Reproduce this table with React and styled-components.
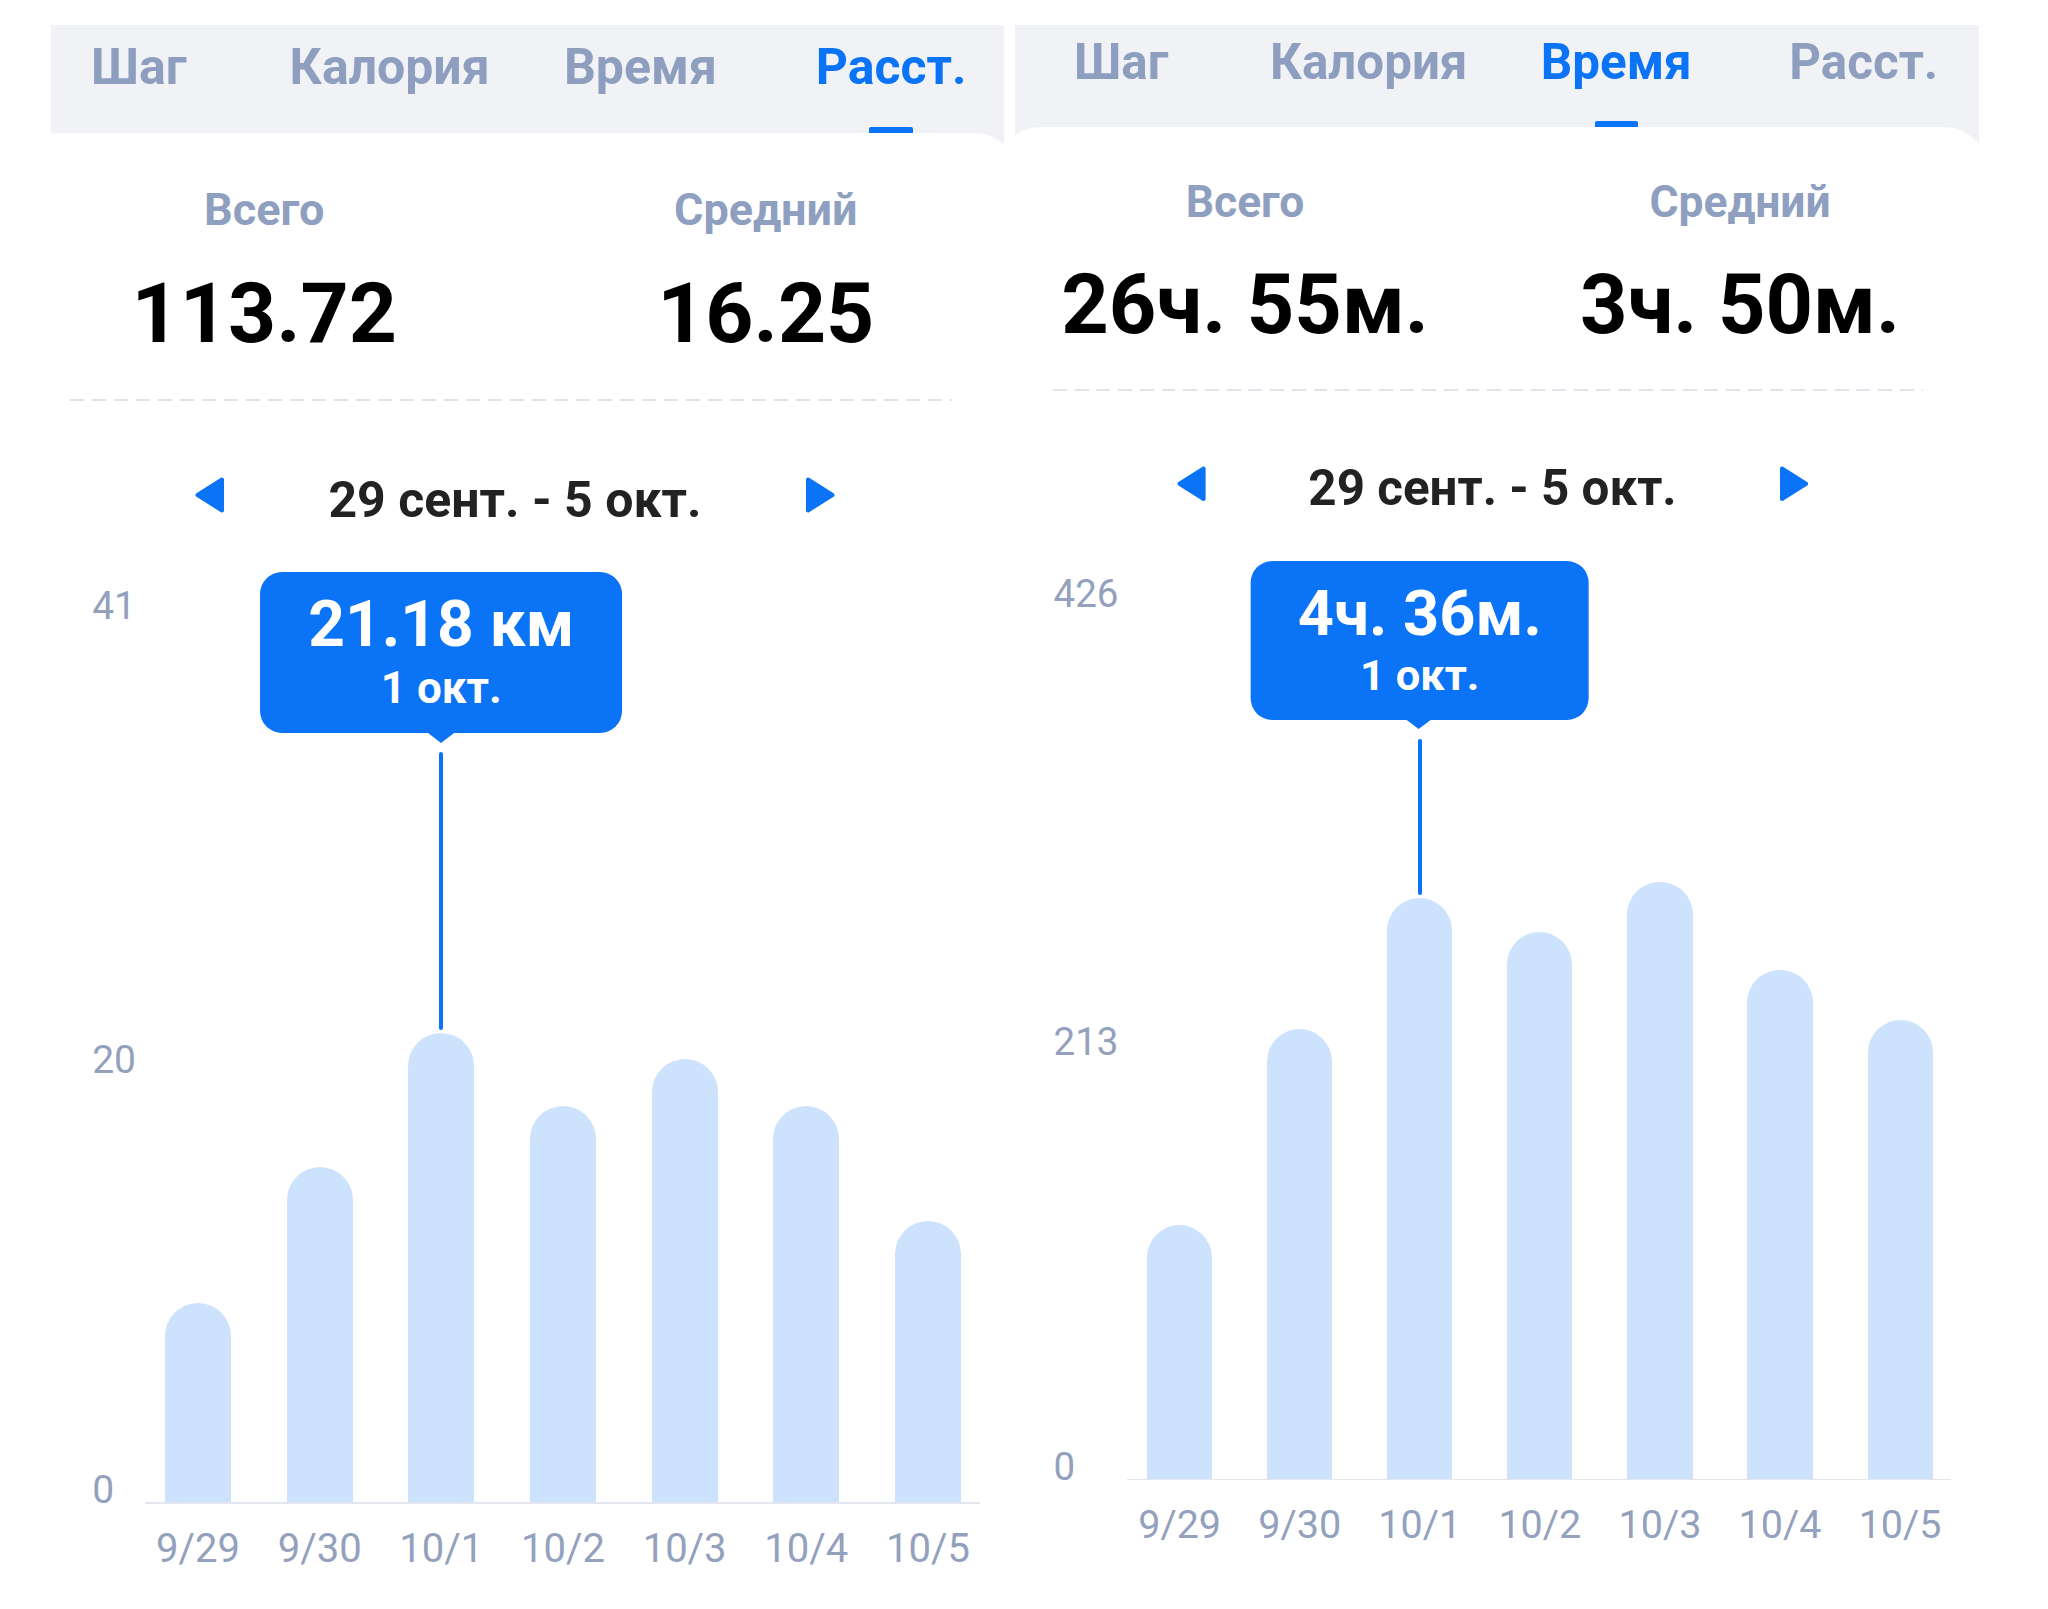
import styled, { createGlobalStyle } from "styled-components";

const BLUE = "#0b73f6";
const SLATE = "#8e9ebe";

const GlobalStyle = createGlobalStyle`
  * { box-sizing: border-box; }
  html, body {
    margin: 0;
    padding: 0;
    background: #fff;
  }
  body {
    font-family: Roboto, "Noto Sans", "Liberation Sans", sans-serif;
  }
`;

const Page = styled.div`
  display: flex;
  gap: 11px;
  width: 2048px;
  height: 1609px;
  padding: 25px 0 0 51px;
  overflow: hidden;
  background: #fff;
`;

const Panel = styled.section`
  flex-shrink: 0;
  width: ${p => p.$width}px;
  height: 1584px;
  overflow: hidden;
`;

const Screen = styled.div`
  width: 1003px;
  margin-left: ${p => p.$offset}px;
  zoom: ${p => p.$zoom};
`;

const TabBar = styled.div`
  display: grid;
  grid-template-columns: repeat(4, 1fr);
  height: ${p => p.$height + 40}px;
  padding-top: ${p => p.$pad}px;
  padding-bottom: 40px;
  background: #f0f2f6;
`;

const Tab = styled.div`
  display: flex;
  flex-direction: column;
  align-items: center;
  justify-content: space-between;
  font-size: 50px;
  font-weight: 700;
  line-height: 1;
  color: ${p => (p.$active ? BLUE : SLATE)};
`;

const Indicator = styled.span`
  width: 44px;
  height: 6px;
  border-radius: 2px 2px 0 0;
  background: ${BLUE};
`;

const Card = styled.div`
  position: relative;
  margin-top: -40px;
  padding-top: 54px;
  background: #fff;
  border-radius: 43px 43px 0 0;
`;

const Stats = styled.div`
  display: grid;
  grid-template-columns: 1fr 1fr;
`;

const Stat = styled.div`
  display: flex;
  flex-direction: column;
  align-items: center;
  gap: 40px;
`;

const StatLabel = styled.div`
  font-size: 45px;
  font-weight: 700;
  line-height: 1;
  color: #8f9fbf;
`;

const StatValue = styled.div`
  font-size: 84px;
  font-weight: 700;
  line-height: 1;
  color: #000;
`;

const Divider = styled.div`
  height: 2px;
  margin: 43px 65px 0 56px;
  background: repeating-linear-gradient(to right, #dfe3ea 0 14px, transparent 14px 22px);
`;

const DateNav = styled.div`
  display: grid;
  grid-template-columns: 30px 580px 30px;
  justify-content: center;
  align-items: center;
  margin-top: 74px;
`;

const DateText = styled.div`
  text-align: center;
  font-size: 50px;
  font-weight: 700;
  line-height: 1;
  color: #222;
`;

const ArrowIcon = styled.svg`
  display: block;
  margin-bottom: 10px;
  fill: ${BLUE};
  stroke: ${BLUE};
  stroke-width: 4;
  stroke-linejoin: round;
  transform: ${p => (p.$dir === "right" ? "scaleX(-1)" : "none")};
`;

const ChartRow = styled.div`
  display: grid;
  grid-template-columns: 131.5px 835px;
  align-items: end;
  margin-top: 63px;
`;

const Axis = styled.div`
  display: grid;
  grid-template-rows: 916px;
  justify-self: end;
  margin-right: 9px;
`;

const AxisLabel = styled.span`
  grid-area: 1 / 1;
  align-self: end;
  margin-bottom: ${p => p.$bottom}px;
  font-size: 39px;
  line-height: 1;
  color: #93a1bd;
`;

const Plot = styled.div`
  display: flex;
  align-items: flex-end;
  justify-content: space-between;
  height: 910px;
  padding: 0 19px 0 20px;
  border-bottom: 2px solid #e3e6ee;
`;

const BarSlot = styled.div`
  position: relative;
  display: flex;
  align-items: flex-end;
  width: 66px;
  height: 100%;
`;

const Bar = styled.div`
  width: 100%;
  background: #cde2fc;
  border-radius: 33px 33px 0 0;
`;

const Guide = styled.div`
  position: absolute;
  left: 50%;
  width: 4px;
  margin-left: -2px;
  border-radius: 2px;
  background: ${BLUE};
`;

const Tooltip = styled.div`
  position: absolute;
  left: 50%;
  bottom: 769px;
  transform: translateX(-50%);
  display: flex;
  flex-direction: column;
  align-items: center;
  gap: 9px;
  padding: 21px 48px 23px;
  border-radius: 22px;
  background: ${BLUE};
  color: #fff;
  white-space: nowrap;

  &::after {
    content: "";
    position: absolute;
    left: 50%;
    top: 100%;
    margin-left: -13px;
    border-left: 13px solid transparent;
    border-right: 13px solid transparent;
    border-top: 10px solid ${BLUE};
  }
`;

const TipValue = styled.div`
  font-size: 64px;
  font-weight: 700;
  line-height: 1;
`;

const TipDate = styled.div`
  font-size: 44px;
  font-weight: 700;
  line-height: 1;
`;

const XLabels = styled.div`
  grid-column: 2;
  display: flex;
  justify-content: space-between;
  padding: 25px 19px 0 20px;
`;

const XLabel = styled.span`
  display: flex;
  justify-content: center;
  width: 66px;
  white-space: nowrap;
  font-size: 40px;
  line-height: 1;
  color: #93a1bd;
`;

const TABS = ["Шаг", "Калория", "Время", "Расст."];
const DAYS = ["9/29", "9/30", "10/1", "10/2", "10/3", "10/4", "10/5"];
const PLOT_H = 908;
const AXIS_POS = [884, 430, 0];

const panels = [
  {
    width: 953,
    offset: -37.5,
    zoom: 1,
    tabHeight: 108,
    tabPad: 17,
    active: 3,
    total: "113.72",
    average: "16.25",
    axis: ["41", "20", "0"],
    max: 41,
    values: [8.98, 15.12, 21.18, 17.86, 20.02, 17.86, 12.7],
    selected: 2,
    tip: "21.18 км",
  },
  {
    width: 964,
    offset: -17.7,
    zoom: 0.987,
    tabHeight: 103.3,
    tabPad: 12.7,
    active: 2,
    total: "26ч. 55м.",
    average: "3ч. 50м.",
    axis: ["426", "213", "0"],
    max: 426,
    values: [121, 214, 276, 260, 284, 242, 218],
    selected: 2,
    tip: "4ч. 36м.",
  },
];

const Arrow = ({ dir }) => (
  <ArrowIcon viewBox="0 0 30 36" width="30" height="36" $dir={dir}>
    <polygon points="27,2.5 27,33.5 2.5,18" />
  </ArrowIcon>
);

const StatsPanel = ({ data }) => {
  const { width, offset, zoom, tabHeight, tabPad, active, total, average, axis, max, values, selected, tip } = data

  return (
    <Panel $width={width}>
      <Screen $offset={offset} $zoom={zoom}>
        <TabBar $height={tabHeight} $pad={tabPad}>
          {TABS.map((tab, i) => (
            <Tab key={tab} $active={i === active}>
              {tab}
              {i === active && <Indicator />}
            </Tab>
          ))}
        </TabBar>

        <Card>
          <Stats>
            <Stat>
              <StatLabel>Всего</StatLabel>
              <StatValue>{total}</StatValue>
            </Stat>
            <Stat>
              <StatLabel>Средний</StatLabel>
              <StatValue>{average}</StatValue>
            </Stat>
          </Stats>

          <Divider />

          <DateNav>
            <Arrow dir="left" />
            <DateText>29 сент. - 5 окт.</DateText>
            <Arrow dir="right" />
          </DateNav>

          <ChartRow>
            <Axis>
              {axis.map((label, i) => (
                <AxisLabel key={label} $bottom={AXIS_POS[i] - 6.2}>{label}</AxisLabel>
              ))}
            </Axis>
            <Plot>
              {values.map((v, i) => {
                const h = (v / max) * PLOT_H
                return (
                  <BarSlot key={DAYS[i]}>
                    <Bar style={{ height: h }} />
                    {i === selected && (
                      <>
                        <Guide style={{ bottom: h + 3, height: 750 - h - 3 }} />
                        <Tooltip>
                          <TipValue>{tip}</TipValue>
                          <TipDate>1 окт.</TipDate>
                        </Tooltip>
                      </>
                    )}
                  </BarSlot>
                )
              })}
            </Plot>
            <XLabels>
              {DAYS.map(day => (
                <XLabel key={day}>{day}</XLabel>
              ))}
            </XLabels>
          </ChartRow>
        </Card>
      </Screen>
    </Panel>
  )
}

const App = () => {
  return (
    <>
      <GlobalStyle />
      <Page>
        {panels.map((p, i) => (
          <StatsPanel key={i} data={p} />
        ))}
      </Page>
    </>
  )
}

export default App
